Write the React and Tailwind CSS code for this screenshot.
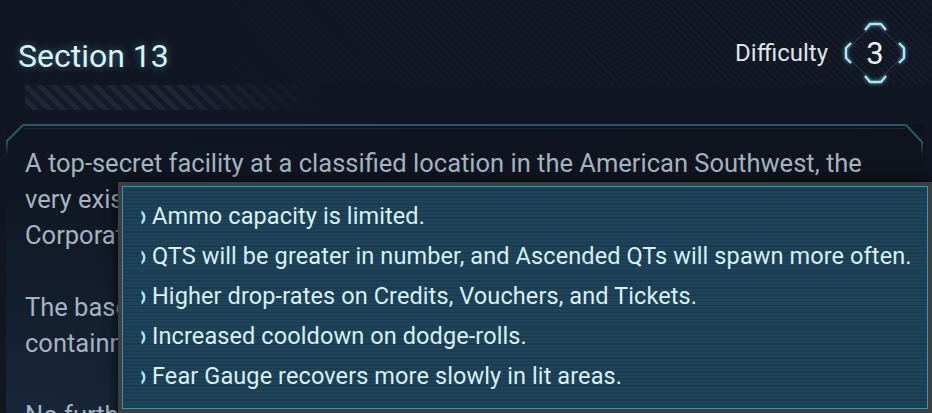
import React from 'react';

const perks = [
    'Ammo capacity is limited.',
    'QTS will be greater in number, and Ascended QTs will spawn more often.',
    'Higher drop-rates on Credits, Vouchers, and Tickets.',
    'Increased cooldown on dodge-rolls.',
    'Fear Gauge recovers more slowly in lit areas.',
];

const lines = [
    'A top-secret facility at a classified location in the American Southwest, the',
    'very existence of which is officially denied by both the government and the',
    'Corporation itself.',
    '',
    'The base was built for the study of anomalous specimens and their long-term',
    'containment, far from any prying eyes or curious civilians.',
    '',
    'No further information is available at this clearance level.',
];

const Bullet = () => (
    <svg width="6" height="15" viewBox="0 0 6 15" className="shrink-0">
        <path d="M0.5 0.5 C5.8 3.5 5.8 11.5 0.5 14.5 L0.5 11 C2.6 9 2.6 6 0.5 4 Z" fill="#a3e3f1" />
    </svg>
);

const DifficultyBadge = ({ level }) => (
    <div className="relative w-[70px] h-[70px] flex items-center justify-center">
        <svg width="70" height="70" viewBox="0 0 70 70" className="absolute inset-0">
            <path d="M35 4 L66 35 L35 66 L4 35 Z" fill="none" stroke="#26404f" strokeWidth="1" />
            <g
                fill="none"
                stroke="#a8e7f4"
                strokeWidth="2.4"
                strokeLinejoin="round"
                style={{ filter: 'drop-shadow(0 0 2px rgba(120,220,240,0.7))' }}
            >
                <path d="M25 12 L30 6 L41 6 L46 12" />
                <path d="M25 58 L30 64 L41 64 L46 58" />
                <path d="M11 25 L6 30 L6 40 L11 45" />
                <path d="M59 25 L64 30 L64 40 L59 45" />
            </g>
        </svg>
        <span className="relative text-[31px] leading-none text-[#eef5f7] mt-[1px]">{level}</span>
    </div>
);

const App = () => {
    return (
        <div className="w-[932px] h-[413px] overflow-hidden relative bg-[#111623] font-[Roboto,sans-serif]">
            {/* header */}
            <div className="h-[85px] pt-[18px] pl-[18px] pr-[22px] flex items-center justify-between bg-[linear-gradient(90deg,#111623_0%,rgba(17,22,35,0.75)_35%,rgba(17,22,35,0.2)_100%),repeating-linear-gradient(45deg,#111623_0px,#111623_3px,#171d2b_3px,#171d2b_5px)]">
                <h1 className="mt-[9px] text-[32px] leading-[40px] text-[#d8f6fb] [text-shadow:0_0_8px_rgba(110,210,235,0.45)]">
                    Section 13
                </h1>
                <div className="mt-[3px] flex items-center gap-[12px]">
                    <span className="text-[24px] leading-[32px] text-[#dde5ea]">Difficulty</span>
                    <DifficultyBadge level={3} />
                </div>
            </div>

            {/* striped bar */}
            <div className="ml-[25px] w-[300px] h-[25px] relative bg-[repeating-linear-gradient(45deg,#141a27_0px,#141a27_5px,#1f2636_5px,#1f2636_10px)]">
                <div className="absolute inset-0 bg-linear-to-r from-transparent via-transparent to-[#111623]" />
            </div>

            {/* panel */}
            <div className="relative mt-[14px] mx-[6px] h-[300px] bg-[radial-gradient(ellipse_at_0%_100%,#18273a_0%,#101722_55%,#0e131d_100%)]">
                <svg width="917" height="60" viewBox="0 0 917 60" className="absolute left-0 top-0">
                    <defs>
                        <linearGradient id="fade" x1="0" y1="0" x2="0" y2="1">
                            <stop offset="0" stopColor="#24596a" stopOpacity="1" />
                            <stop offset="0.35" stopColor="#24596a" stopOpacity="1" />
                            <stop offset="0.7" stopColor="#24596a" stopOpacity="0" />
                        </linearGradient>
                    </defs>
                    <path d="M1 45 L1 17 L17 1 L900 1 L916 18 L916 45" fill="none" stroke="url(#fade)" strokeWidth="2" />
                    <path d="M18 4.5 L899 4.5" fill="none" stroke="#172c38" strokeWidth="1" />
                </svg>
                <div className="pt-[21px] pl-[19px] text-[25.5px] leading-[36px] text-[#a4b3c0] whitespace-nowrap">
                    {lines.map((line, i) => (
                        <div key={i} className="h-[36px]">
                            {line}
                        </div>
                    ))}
                </div>
            </div>

            {/* perks tooltip */}
            <div className="absolute left-[118px] top-[182px] w-[814px] border-4 border-[#3c3e41] shadow-[0_0_12px_rgba(0,0,0,0.85)]">
                <div className="border border-[#3f93a7] pt-[10px] pb-[11px] pl-[18px] bg-[repeating-linear-gradient(180deg,#1f445a_0px,#1f445a_2px,#1a3b50_2px,#1a3b50_3.5px)]">
                    {perks.map((perk) => (
                        <div key={perk} className="h-[40px] flex items-center gap-[5px] text-[23.5px] tracking-[0.1px] text-[#d8f0f6] whitespace-nowrap">
                            <Bullet />
                            <span>{perk}</span>
                        </div>
                    ))}
                </div>
            </div>
        </div>
    );
};

export default App;
